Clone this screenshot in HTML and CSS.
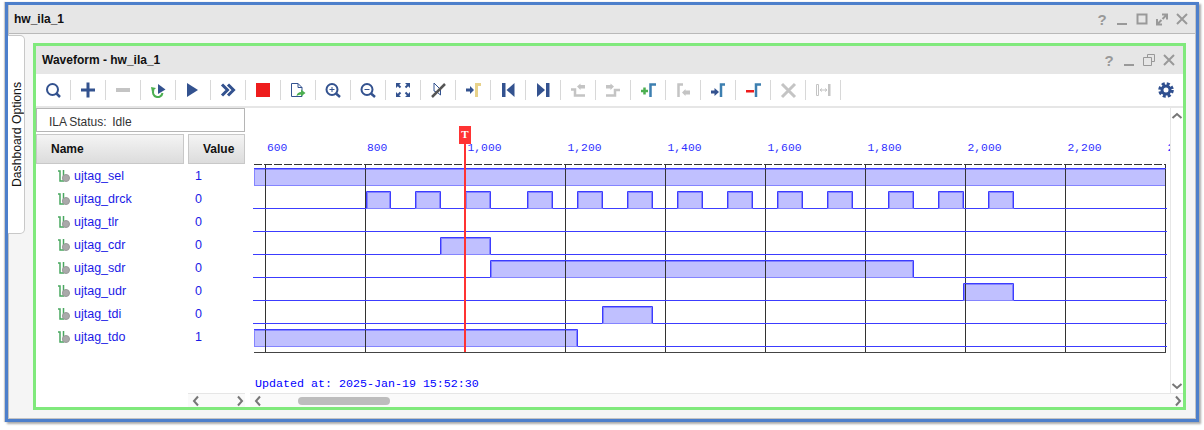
FILE: index.html

```html
<!DOCTYPE html>
<html lang="en">
<head>
  <meta charset="UTF-8" />
  <title>hw_ila_1</title>
  <link rel="stylesheet" href="styles.css">
</head>
<body>
  <div class="window">
    <div class="frame">
      <div class="titlebar outer-title">
        <span class="title">hw_ila_1</span>
        <div class="controls">
          <span class="ctl help">?</span>
          <span class="ctl"><svg width="14" height="14" viewBox="0 0 14 14"><rect x="2" y="11" width="10" height="2"/></svg></span>
          <span class="ctl"><svg width="14" height="14" viewBox="0 0 14 14"><rect x="2.5" y="2.5" width="9" height="9" class="line"/></svg></span>
          <span class="ctl"><svg width="14" height="14" viewBox="0 0 14 14"><path d="M7 2.5H12V7.500M12 2.500L7.500 7M2 7V12.500H7M2 12.500L6.500 8" class="line"/></svg></span>
          <span class="ctl"><svg width="14" height="14" viewBox="0 0 14 14"><path d="M2 2L12 12M12 2L2 12" class="line"/></svg></span>
        </div>
      </div>

      <div class="workspace">
        <div class="side-tab"><span>Dashboard Options</span></div>

        <div class="panel">
          <div class="titlebar inner-title">
            <span class="title">Waveform - hw_ila_1</span>
            <div class="controls">
              <span class="ctl help">?</span>
              <span class="ctl"><svg width="14" height="14" viewBox="0 0 14 14"><rect x="2" y="11" width="10" height="2"/></svg></span>
              <span class="ctl"><svg width="14" height="14" viewBox="0 0 14 14"><path d="M5.500 4.500V1.500H12.500V8.500H9.500M1.500 4.500H9.500V12.500H1.500Z" class="thin"/></svg></span>
              <span class="ctl"><svg width="14" height="14" viewBox="0 0 14 14"><path d="M2 2L12 12M12 2L2 12" class="line"/></svg></span>
            </div>
          </div>

          <div class="toolbar">
            <span class="tool"><svg viewBox="0 0 20 20"><circle cx="9.500" cy="9.500" r="5.500" class="ink"/><path d="M13.500 13.500L17 17" class="ink fat"/></svg></span>
            <span class="tool"><svg viewBox="0 0 20 20"><path d="M3 10H17M10 2.500V17.500" class="ink heavy"/></svg></span>
            <span class="tool"><svg viewBox="0 0 20 20"><rect x="3" y="8" width="14" height="4" class="off"/></svg></span>
            <span class="tool"><svg viewBox="0 0 20 20"><path d="M5.500 10A4.800 4.800 0 1 0 14.500 13" class="go"/><polygon points="3,7 8,8 4,12" class="go-fill"/><polygon points="10,4 17.500,9.500 10,14" class="navy"/></svg></span>
            <span class="tool"><svg viewBox="0 0 20 20"><polygon points="4,3 15,10 4,17" class="navy"/></svg></span>
            <span class="tool"><svg viewBox="0 0 20 20"><path d="M4 4.500L9.500 10L4 15.500M10 4.500L15.500 10L10 15.500" class="ink heavy"/></svg></span>
            <span class="tool"><svg viewBox="0 0 20 20"><rect x="3" y="3" width="14" height="14" class="stop"/></svg></span>
            <span class="tool"><svg viewBox="0 0 20 20"><path d="M3.500 3.500H10L14 7.500V16.500H3.500ZM10 3.500V7.500H14" class="ink thin"/><path d="M8.500 16C9 13 11 12 13 12V9.500L17.500 13L13 16.500V14.500C11.500 14.500 10 15 8.500 16Z" class="go-fill"/></svg></span>
            <span class="tool"><svg viewBox="0 0 20 20"><circle cx="9" cy="9.500" r="5.500" class="ink"/><path d="M13 13.500L17 17" class="ink fat"/><path d="M6.500 9.500H11.500M9 7V12" class="ink thin"/></svg></span>
            <span class="tool"><svg viewBox="0 0 20 20"><circle cx="9" cy="9.500" r="5.500" class="ink"/><path d="M13 13.500L17 17" class="ink fat"/><path d="M6.500 9.500H11.500" class="ink thin"/></svg></span>
            <span class="tool"><svg viewBox="0 0 20 20"><path d="M3 3H8L3 8ZM17 3H12L17 8ZM3 17H8L3 12ZM17 17H12L17 12Z" class="navy"/><path d="M4.500 4.500L7.500 7.500M15.500 4.500L12.500 7.500M4.500 15.500L7.500 12.500M15.500 15.500L12.500 12.500" class="ink"/></svg></span>
            <span class="tool"><svg viewBox="0 0 20 20"><path d="M6 3L12.500 9.500L12.500 15L9.500 12.500L6 11Z" class="ink thin"/><path d="M4 17L17 4" class="slash"/></svg></span>
            <span class="tool"><svg viewBox="0 0 20 20"><path d="M3 8.500H7V6L11 10L7 14V11.500H3Z" class="navy"/><path d="M13.500 17V4.500H18" class="gamma yellow"/></svg></span>
            <span class="tool"><svg viewBox="0 0 20 20"><rect x="4" y="3" width="3.500" height="14" class="navy"/><polygon points="16.500,3 8.500,10 16.500,17" class="navy"/></svg></span>
            <span class="tool"><svg viewBox="0 0 20 20"><polygon points="4,3 12,10 4,17" class="navy"/><rect x="13" y="3" width="3.500" height="14" class="navy"/></svg></span>
            <span class="tool"><svg viewBox="0 0 20 20"><path d="M3 9.500H7V15.500H17" class="step"/><path d="M9 6.500L12.500 3.500V5H17V8.500H12.500V10Z" class="off"/></svg></span>
            <span class="tool"><svg viewBox="0 0 20 20"><path d="M3 15.500H12V10H17" class="step"/><path d="M11 6.500L7.500 3.500V5H3V8.500H7.500V10Z" class="off"/></svg></span>
            <span class="tool"><svg viewBox="0 0 20 20"><path d="M3 11H10M6.500 7.500V14.500" class="go heavy-2"/><path d="M12.500 17V4.500H18" class="gamma"/></svg></span>
            <span class="tool"><svg viewBox="0 0 20 20"><path d="M5.500 17V4.500H10" class="gamma grey"/><path d="M9 12.500L12.500 9V10.500H17V14.500H12.500V16Z" class="off"/></svg></span>
            <span class="tool"><svg viewBox="0 0 20 20"><path d="M3 10.500H6.500V8L11 12L6.500 16V13.500H3Z" class="navy"/><path d="M13 17V4.500H17" class="gamma"/></svg></span>
            <span class="tool"><svg viewBox="0 0 20 20"><rect x="3" y="10" width="8" height="2.500" class="stop"/><path d="M13 17V4.500H18" class="gamma"/></svg></span>
            <span class="tool"><svg viewBox="0 0 20 20"><path d="M4 4L17 17M17 4L4 17" class="step wide"/></svg></span>
            <span class="tool"><svg viewBox="0 0 20 20"><path d="M3.500 4.500H5.500V15.500H3.500ZM7 10H14M7 10L9 8.500M7 10L9 11.500M14 10L12 8.500M14 10L12 11.500" class="hair"/><rect x="15" y="4" width="2.500" height="12" class="off"/></svg></span>
            <span class="gear"><svg width="16" height="16" viewBox="0 0 16 16"><circle cx="8" cy="8" r="4" class="gear-ring"/><circle cx="8" cy="8" r="6.300" class="gear-teeth"/></svg></span>
          </div>

          <div class="main">
            <div class="names">
              <div class="status">ILA Status:&nbsp; Idle</div>
              <div class="heads">
                <div class="head head-name">Name</div>
                <div class="head head-value">Value</div>
              </div>
              <div class="row"><span class="sig-name"><svg class="wire" viewBox="0 0 12 12"><path d="M0 1H2V11H5.500V0" class="wire-line"/><circle cx="8" cy="8" r="3.500" class="wire-dot"/></svg>ujtag_sel</span><span class="sig-value">1</span></div>
              <div class="row"><span class="sig-name"><svg class="wire" viewBox="0 0 12 12"><path d="M0 1H2V11H5.500V0" class="wire-line"/><circle cx="8" cy="8" r="3.500" class="wire-dot"/></svg>ujtag_drck</span><span class="sig-value">0</span></div>
              <div class="row"><span class="sig-name"><svg class="wire" viewBox="0 0 12 12"><path d="M0 1H2V11H5.500V0" class="wire-line"/><circle cx="8" cy="8" r="3.500" class="wire-dot"/></svg>ujtag_tlr</span><span class="sig-value">0</span></div>
              <div class="row"><span class="sig-name"><svg class="wire" viewBox="0 0 12 12"><path d="M0 1H2V11H5.500V0" class="wire-line"/><circle cx="8" cy="8" r="3.500" class="wire-dot"/></svg>ujtag_cdr</span><span class="sig-value">0</span></div>
              <div class="row"><span class="sig-name"><svg class="wire" viewBox="0 0 12 12"><path d="M0 1H2V11H5.500V0" class="wire-line"/><circle cx="8" cy="8" r="3.500" class="wire-dot"/></svg>ujtag_sdr</span><span class="sig-value">0</span></div>
              <div class="row"><span class="sig-name"><svg class="wire" viewBox="0 0 12 12"><path d="M0 1H2V11H5.500V0" class="wire-line"/><circle cx="8" cy="8" r="3.500" class="wire-dot"/></svg>ujtag_udr</span><span class="sig-value">0</span></div>
              <div class="row"><span class="sig-name"><svg class="wire" viewBox="0 0 12 12"><path d="M0 1H2V11H5.500V0" class="wire-line"/><circle cx="8" cy="8" r="3.500" class="wire-dot"/></svg>ujtag_tdi</span><span class="sig-value">0</span></div>
              <div class="row"><span class="sig-name"><svg class="wire" viewBox="0 0 12 12"><path d="M0 1H2V11H5.500V0" class="wire-line"/><circle cx="8" cy="8" r="3.500" class="wire-dot"/></svg>ujtag_tdo</span><span class="sig-value">1</span></div>
              <div class="hscroll names-scroll">
                <svg class="arrow" viewBox="0 0 10 12"><path d="M7 1.500L3 6L7 10.500"/></svg>
                <svg class="arrow arrow-end" viewBox="0 0 10 12"><path d="M3 1.500L7 6L3 10.500"/></svg>
              </div>
            </div>

            <div class="wave-side">
              <div class="wave-top">
                <!-- viewBox uses the page coordinates of the pane -->
                <svg class="wave" viewBox="245 108 925 284" width="925" height="284">
                  <g class="ticks">
                    <text x="267" y="151">600</text>
                    <text x="367" y="151">800</text>
                    <text x="467.500" y="151">1,000</text>
                    <text x="567.500" y="151">1,200</text>
                    <text x="667.500" y="151">1,400</text>
                    <text x="767.500" y="151">1,600</text>
                    <text x="867.500" y="151">1,800</text>
                    <text x="967.500" y="151">2,000</text>
                    <text x="1067.500" y="151">2,200</text>
                    <text x="1167.500" y="151">2,400</text>
                  </g>
                  <path d="M254 164.500H1166" class="dash"/>

                  <g class="hi">
                    <rect x="254.500" y="169.500" width="911" height="16"/>
                    <rect x="367.500" y="192.500" width="22" height="16"/>
                    <rect x="416.500" y="192.500" width="23" height="16"/>
                    <rect x="466.500" y="192.500" width="23" height="16"/>
                    <rect x="528.500" y="192.500" width="23" height="16"/>
                    <rect x="578.500" y="192.500" width="23" height="16"/>
                    <rect x="628.500" y="192.500" width="23" height="16"/>
                    <rect x="678.500" y="192.500" width="23" height="16"/>
                    <rect x="728.500" y="192.500" width="23" height="16"/>
                    <rect x="778.500" y="192.500" width="23" height="16"/>
                    <rect x="828.500" y="192.500" width="23" height="16"/>
                    <rect x="889.500" y="192.500" width="23" height="16"/>
                    <rect x="939.500" y="192.500" width="23" height="16"/>
                    <rect x="989.500" y="192.500" width="23" height="16"/>
                    <rect x="441.500" y="238.500" width="48" height="16"/>
                    <rect x="491.500" y="261.500" width="421" height="16"/>
                    <rect x="964.500" y="284.500" width="48" height="16"/>
                    <rect x="603.500" y="307.500" width="48" height="16"/>
                    <rect x="254.500" y="330.500" width="322" height="16"/>
                  </g>

                  <path d="M265.500 164V352M365.500 164V352M565.500 164V352M665.500 164V352M765.500 164V352M865.500 164V352M965.500 164V352M1065.500 164V352M1165.500 164V352" class="grid"/>
                  <path d="M254 352.500H1166" class="base"/>

                  <g class="sig">
                    <path d="M254 168.500H1166"/>
                    <path d="M253 208.500H366.500V191.500H390.500V208.500H415.500V191.500H440.500V208.500H465.500V191.500H490.500V208.500H527.500V191.500H552.500V208.500H577.500V191.500H602.500V208.500H627.500V191.500H652.500V208.500H677.500V191.500H702.500V208.500H727.500V191.500H752.500V208.500H777.500V191.500H802.500V208.500H827.500V191.500H852.500V208.500H888.500V191.500H913.500V208.500H938.500V191.500H963.500V208.500H988.500V191.500H1013.500V208.500H1167"/>
                    <path d="M253 231.500H1167"/>
                    <path d="M253 254.500H440.500V237.500H490.500V254.500H1167"/>
                    <path d="M253 277.500H490.500V260.500H913.500V277.500H1167"/>
                    <path d="M253 300.500H963.500V283.500H1013.500V300.500H1167"/>
                    <path d="M253 323.500H602.500V306.500H652.500V323.500H1167"/>
                    <path d="M254 329.500H577.500V346.500H1167"/>
                  </g>

                  <rect x="464" y="143" width="2" height="209" class="cursor"/>
                  <rect x="459" y="126" width="12" height="18" class="cursor"/>
                  <text x="465" y="138" class="flag">T</text>

                  <text x="255" y="387" class="stamp">Updated at: 2025-Jan-19 15:52:30</text>
                </svg>
                <div class="vscroll">
                  <svg class="arrow" viewBox="0 0 12 10"><path d="M1.500 7L6 3L10.500 7"/></svg>
                  <svg class="arrow arrow-end" viewBox="0 0 12 10"><path d="M1.500 3L6 7L10.500 3"/></svg>
                </div>
              </div>
              <div class="hscroll wave-scroll">
                <svg class="arrow" viewBox="0 0 10 12"><path d="M7 1.500L3 6L7 10.500"/></svg>
                <span class="thumb"></span>
                <svg class="arrow arrow-end" viewBox="0 0 10 12"><path d="M3 1.500L7 6L3 10.500"/></svg>
              </div>
            </div>
          </div>
        </div>
      </div>
    </div>
  </div>
</body>
</html>
```

FILE: styles.css

```css
body {
  margin: 0;
  width: 1204px;
  height: 430px;
  overflow: hidden;
  background-color: #fff;
  font-family: "Liberation Sans", Arial, sans-serif;
}
.window {
  box-sizing: border-box;
  width: 1194px;
  height: 420px;
  margin: 2px 0 0 5px;
  border: 3px solid #4d7fcb;
  box-shadow: 2px 2px 2px #aaa, -1px 0 1px #ccc;
}
.frame {
  box-sizing: border-box;
  height: 100%;
  display: flex;
  flex-direction: column;
  background-color: #f5f5f5;
  border: 1px solid #c4c4c4;
  border-top: none;
}

/* title bars */
.titlebar {
  display: flex;
  align-items: center;
  background-color: #e6e6e6;
  flex: none;
}
.outer-title {
  height: 28px;
  padding: 0 3px 0 5px;
  border-bottom: 1px solid #b9b9b9;
}
.inner-title {
  height: 28px;
  padding: 0 4px 0 6px;
}
.title {
  font-size: 12px;
  font-weight: bold;
  color: #111;
}
.controls {
  display: flex;
  margin-left: auto;
}
.ctl {
  width: 20px;
  height: 20px;
  display: flex;
  align-items: center;
  justify-content: center;
  fill: #999;
}
.ctl .line {
  fill: none;
  stroke: #999;
  stroke-width: 2;
}
.ctl .thin {
  fill: none;
  stroke: #999;
  stroke-width: 1;
}
.help {
  font-size: 15px;
  font-weight: bold;
  color: #999;
}

/* body of the window */
.workspace {
  flex: 1;
  display: flex;
  min-height: 0;
}
.side-tab {
  box-sizing: border-box;
  flex: none;
  width: 17px;
  height: 199px;
  margin: 1px 0 0 -1px;
  padding-left: 2px;
  display: flex;
  align-items: center;
  justify-content: center;
  background-color: #fff;
  border: 1px solid #c8c8c8;
  border-left: none;
  border-radius: 0 5px 5px 0;
}
.side-tab span {
  writing-mode: vertical-rl;
  transform: rotate(180deg);
  font-size: 12.2px;
  line-height: 14px;
  color: #111;
}
.panel {
  flex: 1;
  box-sizing: border-box;
  display: flex;
  flex-direction: column;
  margin: 9px 9px 8px 8px;
  border: 3px solid #80e97c;
  background-color: #fff;
}

/* toolbar */
.toolbar {
  flex: none;
  box-sizing: border-box;
  height: 34px;
  display: flex;
  align-items: center;
  border-bottom: 2px solid #e6e6e6;
}
.tool {
  box-sizing: border-box;
  width: 35px;
  height: 20px;
  display: flex;
  justify-content: center;
  border-right: 1px solid #d8d8d8;
}
.tool svg {
  width: 20px;
  height: 20px;
}
.gear {
  margin-left: auto;
  margin-right: 9px;
  height: 16px;
}
.ink {
  fill: none;
  stroke: #33528f;
  stroke-width: 2;
}
.fat {
  stroke-width: 2.5;
}
.heavy {
  stroke-width: 3;
}
.ink.thin {
  stroke-width: 1;
}
.navy {
  fill: #33528f;
}
.off {
  fill: #c4c4c4;
}
.stop {
  fill: #ee1c1c;
}
.go {
  fill: none;
  stroke: #4caf50;
  stroke-width: 2;
}
.heavy-2 {
  stroke-width: 2.5;
}
.go-fill {
  fill: #4caf50;
}
.slash {
  fill: none;
  stroke: #555;
  stroke-width: 2.5;
}
.gamma {
  fill: none;
  stroke: #3d7fb0;
  stroke-width: 2.5;
}
.gamma.yellow {
  stroke: #e8d28a;
  stroke-width: 3;
}
.gamma.grey {
  stroke: #c4c4c4;
}
.step {
  fill: none;
  stroke: #c4c4c4;
  stroke-width: 2.5;
}
.step.wide {
  stroke-width: 3;
}
.hair {
  fill: none;
  stroke: #c4c4c4;
  stroke-width: 1;
}
.gear-ring {
  fill: none;
  stroke: #2f4f8f;
  stroke-width: 3;
}
.gear-teeth {
  fill: none;
  stroke: #2f4f8f;
  stroke-width: 3;
  stroke-dasharray: 2.950 2;
}

/* names column */
.main {
  flex: 1;
  display: flex;
  min-height: 0;
}
.names {
  width: 209px;
  flex: none;
  display: flex;
  flex-direction: column;
}
.status {
  box-sizing: border-box;
  height: 24px;
  line-height: 24px;
  padding: 1px 0 0 12px;
  border: 1px solid #b5b5b5;
  font-size: 12px;
  word-spacing: -0.5px;
  color: #333;
}
.heads {
  display: flex;
  justify-content: space-between;
  margin-top: 2px;
}
.head {
  box-sizing: border-box;
  height: 30px;
  line-height: 28px;
  background: linear-gradient(#f4f4f4, #dcdcdc);
  border: 1px solid #c8c8c8;
  font-size: 12px;
  font-weight: bold;
  color: #111;
}
.head-name {
  width: 148px;
  padding-left: 14px;
}
.head-value {
  width: 57px;
  padding-left: 14px;
}
.row {
  height: 23px;
  display: flex;
  align-items: center;
  font-size: 12.500px;
  color: #1a1ae6;
}
.sig-name {
  width: 152px;
  padding-left: 22px;
  box-sizing: border-box;
  display: flex;
  align-items: center;
}
.sig-value {
  padding-left: 7px;
}
.wire {
  width: 12px;
  height: 12px;
  margin-right: 4px;
}
.wire-line {
  fill: none;
  stroke: #4aa860;
  stroke-width: 1.500;
}
.wire-dot {
  fill: #aaa;
  stroke: #999;
  stroke-width: 1;
}

/* scrollbars */
.hscroll {
  box-sizing: border-box;
  height: 14px;
  display: flex;
  align-items: center;
  background-color: #fafafa;
  border-top: 1px solid #e6e6e6;
  flex: none;
}
.names-scroll {
  margin: auto 0 0 152px;
  padding: 0 0 0 3px;
}
.wave-scroll {
  margin-left: 5px;
  padding-left: 3px;
}
.thumb {
  width: 92px;
  height: 8px;
  margin-left: 35px;
  border-radius: 4px;
  background-color: #bdbdbd;
}
.arrow {
  width: 10px;
  height: 12px;
  fill: none;
  stroke: #777;
  stroke-width: 2;
}
.arrow-end {
  margin-left: auto;
}
.vscroll {
  box-sizing: border-box;
  width: 13px;
  flex: none;
  display: flex;
  flex-direction: column;
  align-items: center;
  padding: 3px 0 2px;
  border-left: 1px solid #e6e6e6;
}
.vscroll .arrow {
  width: 12px;
  height: 10px;
}
.vscroll .arrow-end {
  margin-top: auto;
  margin-left: 0;
}

/* waveform */
.wave-side {
  flex: 1;
  display: flex;
  flex-direction: column;
  min-width: 0;
}
.wave-top {
  flex: 1;
  display: flex;
  min-height: 0;
}
.wave {
  display: block;
  flex: none;
  overflow: hidden;
}
.ticks text {
  font-family: "Liberation Mono", "Courier New", monospace;
  font-size: 11.330px;
  fill: #3030ff;
}
.stamp {
  font-family: "Liberation Mono", "Courier New", monospace;
  font-size: 11.670px;
  fill: #0000ff;
}
.flag {
  font-family: "Liberation Serif", "Times New Roman", serif;
  font-size: 11px;
  font-weight: bold;
  fill: #fff;
  text-anchor: middle;
}
.dash {
  fill: none;
  stroke: #333;
  stroke-dasharray: 8 2;
}
.hi rect {
  fill: #c0c0ff;
  stroke: #8484ff;
}
.grid {
  fill: none;
  stroke: #333;
}
.base {
  fill: none;
  stroke: #444;
}
.sig path {
  fill: none;
  stroke: #3c3cff;
}
.cursor {
  fill: #ff3333;
}
```
